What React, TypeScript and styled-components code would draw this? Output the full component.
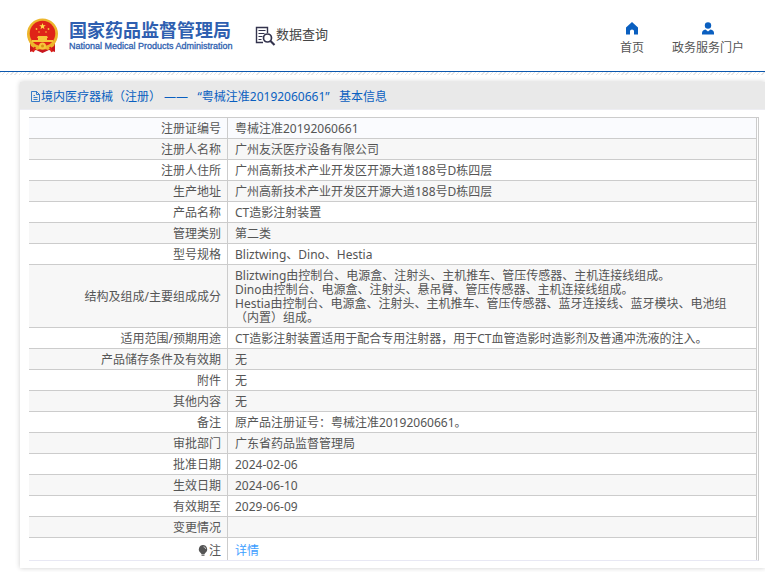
import React from "react";
import styled, { createGlobalStyle } from "styled-components";

const GlobalStyle = createGlobalStyle`
  * { box-sizing: border-box; }
  body {
    margin: 0;
    background: #fff;
    color: #555;
    font: 12px/14px "Noto Sans", "Noto Sans CJK SC", sans-serif;
    overflow-x: hidden;
  }
  a { text-decoration: none; }
`;

const Page = styled.div`
  padding-bottom: 4px;
`;

const Header = styled.header`
  display: flex;
  align-items: center;
  height: 72px;
  padding: 0 21px 0 26px;
  border-bottom: 1px solid #0b57ae;
`;

const Hatch = styled.div`
  height: 3px;
  background: repeating-linear-gradient(135deg, #e6e6e6 0 1px, #fff 1px 3px);
`;

const Brand = styled.a`
  display: flex;
  align-items: center;
  gap: 10px;
  color: #2f5fb0;
`;

const BrandText = styled.span`
  display: flex;
  flex-direction: column;
  width: 160px;
  white-space: nowrap;
`;

const BrandName = styled.span`
  font: 700 18px/20px "Noto Sans CJK SC", sans-serif;
`;

const BrandSub = styled.span`
  font: 400 9px/14px "Liberation Sans", sans-serif;
  -webkit-text-stroke: 0.3px #2f5fb0;
`;

const Section = styled.h1`
  display: flex;
  align-items: center;
  margin: 0 0 0 26px;
  color: #444;
  font: 400 13px/20px "Noto Sans CJK SC", sans-serif;
  white-space: nowrap;
`;

const SectionName = styled.span`
  padding-bottom: 4px;
`;

const Nav = styled.nav`
  display: flex;
  gap: 28px;
  margin-left: auto;
`;

const NavLink = styled.a`
  display: flex;
  flex-direction: column;
  align-items: center;
  gap: 6px;
  padding-top: 6px;
  color: #555;
  white-space: nowrap;
`;

const Card = styled.main`
  margin: 7px 0 0 20px;
  padding-bottom: 7px;
  background: #fff;
  box-shadow: 0 0 5px rgba(0, 0, 0, 0.2);
`;

const CardTitle = styled.h2`
  display: flex;
  align-items: center;
  height: 28px;
  margin: 0 0 7px;
  padding: 2px 10px 0;
  background: #e9e9e9;
  border-bottom: 1px solid #ededf2;
  color: #0a5fc0;
  font-size: 12px;
  font-weight: 400;
  white-space: pre;
`;

const TableFrame = styled.div`
  margin: 0 6px 0 9px;
  border: 1px solid #ccc;
  border-width: 1px 1px 0 0;
  border-bottom: 1px solid #e8e8f4;
  padding-right: 1px;
`;

const Table = styled.table`
  width: 100%;
  border-spacing: 0;
  table-layout: fixed;
`;

const LabelCol = styled.col`
  width: 199px;
`;

const Row = styled.tr`
  background: #fff;
  &:nth-child(even) { background: #f7f7f7; }
  &:first-child { background: #fafbfe; }
  &:last-child > * {
    border-bottom: 0;
    padding-top: 6px;
  }
`;

const Label = styled.th`
  padding: 4px 6px 2px;
  border-right: 1px solid #ccc;
  border-bottom: 1px solid #ccc;
  font-weight: 400;
  text-align: right;
`;

const Value = styled.td`
  padding: 4px 12px 2px 7px;
  border-right: 1px solid #ccc;
  border-bottom: 1px solid #ccc;
  white-space: pre-line;
`;

const DetailLink = styled.a`
  color: #409eff;
`;

const Emblem = () => (
  <svg width="33" height="36" viewBox="0 0 33 36" aria-hidden="true">
    <path d="M4 24 4 34 10 32 16.500 35 23 32 29 34 29 24Z" fill="#c9171e" />
    <circle cx="16.500" cy="16" r="15.500" fill="#edb62c" />
    <circle cx="16.500" cy="15.500" r="12.800" fill="#df2418" />
    <path d="m16.500 5 .8 2.300h2.500l-2 1.500.7 2.400-2-1.500-2 1.500.7-2.400-2-1.500h2.500z" fill="#ffe04a" />
    <g fill="#f7c63b">
      <circle cx="10.500" cy="11" r=".9" /><circle cx="22.500" cy="11" r=".9" />
      <circle cx="13" cy="14" r=".8" /><circle cx="20" cy="14" r=".8" />
      <path d="M12 18h9l1 2h-1v2h6v2H6v-2h6v-2h-1z" />
    </g>
    <path d="M3 22c4 5 8 6 13.500 6S26 27 30 22l-2 6-6 4-5.500-2-5.500 2-6-4z" fill="#edb62c" />
    <circle cx="16.500" cy="28" r="3.500" fill="#f7c63b" />
    <circle cx="16.500" cy="28" r="1.500" fill="#d99016" />
    <path d="M9 29 7 34M24 29l2 5" stroke="#df2418" strokeWidth="2" />
  </svg>
);

const SearchDoc = () => (
  <svg width="21" height="20" viewBox="0 0 21 20" fill="none" stroke="#33334d" aria-hidden="true">
    <path d="M8 16.500H1.500v-15h11V7" strokeWidth="1.400" />
    <path d="M3.500 4.500h7M3.500 7.500h6M3.500 10.500h4M3.500 13.500h3" strokeWidth="1.100" />
    <circle cx="12.500" cy="12" r="4" strokeWidth="1.700" />
    <path d="m15.500 15 4 4" strokeWidth="2.200" />
  </svg>
);

const HomeIcon = () => (
  <svg width="14" height="13" viewBox="0 0 14 13" fill="#0a5fc0" aria-hidden="true">
    <path d="M7 0 13 5.500V12.500H9V9Q9 7.500 7 7.500T5 9v3.500H1V5.500Z" />
  </svg>
);

const UserIcon = () => (
  <svg width="14" height="13" viewBox="0 0 14 13" fill="#0a5fc0" aria-hidden="true">
    <circle cx="7" cy="3.500" r="3.200" />
    <path d="M1 12.500V11Q1 8 4.500 7.500L7 9.500 9.500 7.500Q13 8 13 11v1.500Z" />
  </svg>
);

const DocIcon = () => (
  <svg width="11" height="12" viewBox="0 0 11 12" fill="none" stroke="#0a5fc0" aria-hidden="true">
    <path d="M1.500 .5h5l3 3v7h-8zM6.500 .5v3h3M3.500 6.500h4M3.500 8.500h4M3.500 4.500h1.500" strokeWidth=".8" />
  </svg>
);

const Bulb = styled.svg`
  margin-right: 1px;
  vertical-align: -1px;
`;

const BulbIcon = () => (
  <Bulb width="10" height="11" viewBox="0 0 10 11" fill="#555" aria-hidden="true">
    <path d="M5 0a4.300 4.300 0 0 1 2.500 7.700L6.500 9h-3L2.500 7.700A4.300 4.300 0 0 1 5 0ZM3.500 9.500h3v1.200h-3z" />
    <path d="M5.500 1.800Q7.500 2 7.800 4" fill="none" stroke="#ddd" strokeWidth=".8" />
  </Bulb>
);

const records: [string, string][] = [
  ["注册证编号", "粤械注准20192060661"],
  ["注册人名称", "广州友沃医疗设备有限公司"],
  ["注册人住所", "广州高新技术产业开发区开源大道188号D栋四层"],
  ["生产地址", "广州高新技术产业开发区开源大道188号D栋四层"],
  ["产品名称", "CT造影注射装置"],
  ["管理类别", "第二类"],
  ["型号规格", "Bliztwing、Dino、Hestia"],
  [
    "结构及组成/主要组成成分",
    "Bliztwing由控制台、电源盒、注射头、主机推车、管压传感器、主机连接线组成。\nDino由控制台、电源盒、注射头、悬吊臂、管压传感器、主机连接线组成。\nHestia由控制台、电源盒、注射头、主机推车、管压传感器、蓝牙连接线、蓝牙模块、电池组（内置）组成。",
  ],
  ["适用范围/预期用途", "CT造影注射装置适用于配合专用注射器，用于CT血管造影时造影剂及普通冲洗液的注入。"],
  ["产品储存条件及有效期", "无"],
  ["附件", "无"],
  ["其他内容", "无"],
  ["备注", "原产品注册证号：粤械注准20192060661。"],
  ["审批部门", "广东省药品监督管理局"],
  ["批准日期", "2024-02-06"],
  ["生效日期", "2024-06-10"],
  ["有效期至", "2029-06-09"],
  ["变更情况", "\u00a0"],
];

export default function App() {
  return (
    <Page lang="zh-CN">
      <GlobalStyle />
      <Header>
        <Brand href="#">
          <Emblem />
          <BrandText>
            <BrandName>国家药品监督管理局</BrandName>
            <BrandSub>National Medical Products Administration</BrandSub>
          </BrandText>
        </Brand>
        <Section>
          <SearchDoc />
          <SectionName>数据查询</SectionName>
        </Section>
        <Nav>
          <NavLink href="#"><HomeIcon />首页</NavLink>
          <NavLink href="#"><UserIcon />政务服务门户</NavLink>
        </Nav>
      </Header>
      <Hatch />
      <Card>
        <CardTitle>
          <DocIcon />
          境内医疗器械（注册） ——   “粤械注准20192060661”   基本信息
        </CardTitle>
        <TableFrame>
          <Table>
            <colgroup>
              <LabelCol />
              <col />
            </colgroup>
            <tbody>
              {records.map(([label, value]) => (
                <Row key={label}>
                  <Label scope="row">{label}</Label>
                  <Value>{value}</Value>
                </Row>
              ))}
              <Row>
                <Label scope="row"><BulbIcon />注</Label>
                <Value><DetailLink href="#">详情</DetailLink></Value>
              </Row>
            </tbody>
          </Table>
        </TableFrame>
      </Card>
    </Page>
  );
}
